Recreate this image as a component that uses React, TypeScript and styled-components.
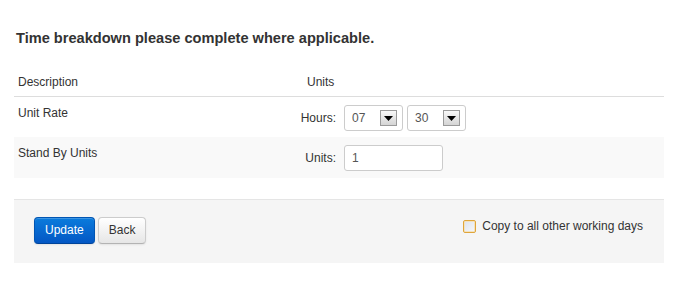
import React from "react";
import styled, { createGlobalStyle } from "styled-components";

const Global = createGlobalStyle`
  html, body { margin: 0; padding: 0; background: #fff; }
  body { font-family: "Liberation Sans", Arial, sans-serif; font-size: 12px; color: #333; }
  * { box-sizing: border-box; }
`;

const Page = styled.div`
  padding: 28px 34px 0 14px;
  width: 698px;
`;

const Title = styled.h3`
  margin: 0 0 14px 2px;
  font-size: 14.6px;
  font-weight: bold;
  line-height: 20px;
  color: #333;
`;

const Table = styled.div`
  display: grid;
  grid-template-columns: 285px 1fr;
`;

const HeadCell = styled.div<{ $indent?: number }>`
  padding: 11px 4px 5px ${(p) => p.$indent ?? 4}px;
  line-height: 18px;
  border-bottom: 1px solid #dddddd;
  color: #333;
`;

const Cell = styled.div<{ $striped?: boolean }>`
  background: ${(p) => (p.$striped ? "#f9f9f9" : "#ffffff")};
  padding: 7px 4px 0 4px;
  line-height: 18px;
  min-height: ${(p) => (p.$striped ? 41 : 40)}px;
`;

const ControlCell = styled.div<{ $striped?: boolean }>`
  background: ${(p) => (p.$striped ? "#f9f9f9" : "#ffffff")};
  display: flex;
  align-items: center;
  gap: 4px;
  padding: ${(p) => (p.$striped ? "7px 0" : "8px 0 6px")};
  min-height: ${(p) => (p.$striped ? 41 : 40)}px;
`;

const FieldLabel = styled.span`
  width: 37px;
  text-align: right;
  margin-right: 4px;
  color: #333;
  white-space: nowrap;
`;

const Select = styled.div`
  width: 59px;
  height: 26px;
  border: 1px solid #cccccc;
  border-radius: 3px;
  background: #fff;
  display: flex;
  align-items: center;
  justify-content: space-between;
  padding: 0 5px 0 7px;
  color: #555;
`;

const Arrow = styled.span`
  width: 17px;
  height: 16px;
  border: 1px solid #9a9a9a;
  background: linear-gradient(#f8f8f8, #d4d4d4);
  display: flex;
  align-items: center;
  justify-content: center;
`;

const Input = styled.div`
  width: 99px;
  height: 26px;
  border: 1px solid #cccccc;
  border-radius: 3px;
  background: #fff;
  padding: 0 7px;
  line-height: 24px;
  color: #555;
`;

const Footer = styled.div`
  margin-top: 21px;
  background: #f5f5f5;
  border-top: 1px solid #e5e5e5;
  height: 64px;
  padding: 17px 20px 0 20px;
  display: flex;
  justify-content: space-between;
  align-items: flex-start;
`;

const Buttons = styled.div`
  display: flex;
  gap: 3px;
`;

const Button = styled.button<{ $primary?: boolean }>`
  font-family: "Liberation Sans", Arial, sans-serif;
  font-size: 12px;
  height: 27px;
  padding: 0 10px;
  border-radius: 4px;
  cursor: pointer;
  line-height: 25px;
  color: ${(p) => (p.$primary ? "#fff" : "#333")};
  border: 1px solid ${(p) => (p.$primary ? "#0055b3" : "#cccccc")};
  border-bottom-color: ${(p) => (p.$primary ? "#00449a" : "#b3b3b3")};
  background: ${(p) =>
    p.$primary
      ? "linear-gradient(#0a7bdc, #0457c4)"
      : "linear-gradient(#ffffff, #e6e6e6)"};
  box-shadow: inset 0 1px 0 rgba(255,255,255,0.2), 0 1px 2px rgba(0,0,0,0.08);
`;

const CheckLabel = styled.label`
  display: flex;
  align-items: center;
  gap: 6px;
  margin-top: 2px;
  margin-right: 1px;
  color: #333;
`;

const Box = styled.span`
  width: 13px;
  height: 13px;
  border: 1px solid #e0a53a;
  border-radius: 2px;
  background: linear-gradient(135deg, #dde3ee, #f6f7fa);
  box-shadow: inset 0 0 0 1px #f3e3bf;
`;

const TriangleIcon = () => (
  <svg width="9" height="5" viewBox="0 0 9 5">
    <path d="M0 0 H9 L4.5 5 Z" fill="#000" />
  </svg>
);

export default function App() {
  return (
    <Page>
      <Global />
      <Title>Time breakdown please complete where applicable.</Title>
      <Table>
        <HeadCell>Description</HeadCell>
        <HeadCell $indent={8}>Units</HeadCell>
        <Cell>Unit Rate</Cell>
        <ControlCell>
          <FieldLabel>Hours:</FieldLabel>
          <Select>
            07
            <Arrow>
              <TriangleIcon />
            </Arrow>
          </Select>
          <Select>
            30
            <Arrow>
              <TriangleIcon />
            </Arrow>
          </Select>
        </ControlCell>
        <Cell $striped>Stand By Units</Cell>
        <ControlCell $striped>
          <FieldLabel>Units:</FieldLabel>
          <Input>1</Input>
        </ControlCell>
      </Table>
      <Footer>
        <Buttons>
          <Button $primary>Update</Button>
          <Button>Back</Button>
        </Buttons>
        <CheckLabel>
          <Box />
          Copy to all other working days
        </CheckLabel>
      </Footer>
    </Page>
  );
}
